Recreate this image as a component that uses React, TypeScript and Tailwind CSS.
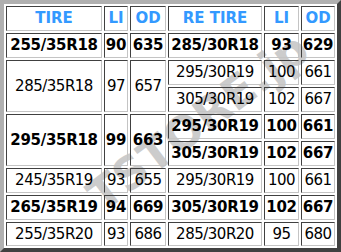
import React from "react";

type Cell = { t: string; rs?: number; b?: boolean };

const head = ["TIRE", "LI", "OD", "RE TIRE", "LI", "OD"];
const widths = ["w-[96px]", "w-[24px]", "w-[36px]", "w-[94px]", "w-[35px]", "w-[34px]"];

const rows: { h: string; cells: Cell[] }[] = [
  { h: "h-[25px]", cells: [{ t: "255/35R18", b: true }, { t: "90", b: true }, { t: "635", b: true }, { t: "285/30R18", b: true }, { t: "93", b: true }, { t: "629", b: true }] },
  { h: "h-[25px]", cells: [{ t: "285/35R18", rs: 2 }, { t: "97", rs: 2 }, { t: "657", rs: 2 }, { t: "295/30R19" }, { t: "100" }, { t: "661" }] },
  { h: "h-[25px]", cells: [{ t: "305/30R19" }, { t: "102" }, { t: "667" }] },
  { h: "h-[25px]", cells: [{ t: "295/35R18", rs: 2, b: true }, { t: "99", rs: 2, b: true }, { t: "663", rs: 2, b: true }, { t: "295/30R19", b: true }, { t: "100", b: true }, { t: "661", b: true }] },
  { h: "h-[25px]", cells: [{ t: "305/30R19", b: true }, { t: "102", b: true }, { t: "667", b: true }] },
  { h: "h-[25px]", cells: [{ t: "245/35R19" }, { t: "93" }, { t: "655" }, { t: "295/30R19" }, { t: "100" }, { t: "661" }] },
  { h: "h-[25px]", cells: [{ t: "265/35R19", b: true }, { t: "94", b: true }, { t: "669", b: true }, { t: "305/30R19", b: true }, { t: "102", b: true }, { t: "667", b: true }] },
  { h: "h-[24px]", cells: [{ t: "255/35R20" }, { t: "93" }, { t: "686" }, { t: "285/30R20" }, { t: "95" }, { t: "680" }] },
];

const cellBase =
  "p-0 text-center align-middle leading-none border border-t-[#404040] border-l-[#404040] border-r-[#c4c4c4] border-b-[#c4c4c4]";

export default function App() {
  return (
    <div className="relative w-[341px] h-[252px] bg-white overflow-hidden font-['DejaVu_Sans',sans-serif] text-black">
      <div className="absolute left-[198px] top-[122px] -translate-x-1/2 -translate-y-1/2 -rotate-[37deg] whitespace-nowrap text-[45px] font-bold leading-none text-[#cccccc] select-none pointer-events-none">
        TSTORE.jp
      </div>
      <table className="relative w-[341px] table-fixed border-separate border-spacing-[2px] border-[4px] border-t-[#b0b0b0] border-l-[#b0b0b0] border-b-[#404040] border-r-[#404040]">
        <tbody>
          <tr className="h-[25px]">
            {head.map((h, i) => (
              <td key={i} className={`${cellBase} ${widths[i]} font-bold text-[15px] text-[#3399ff]`}>
                {h}
              </td>
            ))}
          </tr>
          {rows.map((r, ri) => (
            <tr key={ri} className={r.h}>
              {r.cells.map((c, ci) => (
                <td
                  key={ci}
                  rowSpan={c.rs}
                  className={`${cellBase} ${
                    c.b ? "font-bold text-[15px] tracking-[-0.3px]" : "text-[15px] tracking-[-0.5px]"
                  }`}
                >
                  {c.t}
                </td>
              ))}
            </tr>
          ))}
        </tbody>
      </table>
    </div>
  );
}
